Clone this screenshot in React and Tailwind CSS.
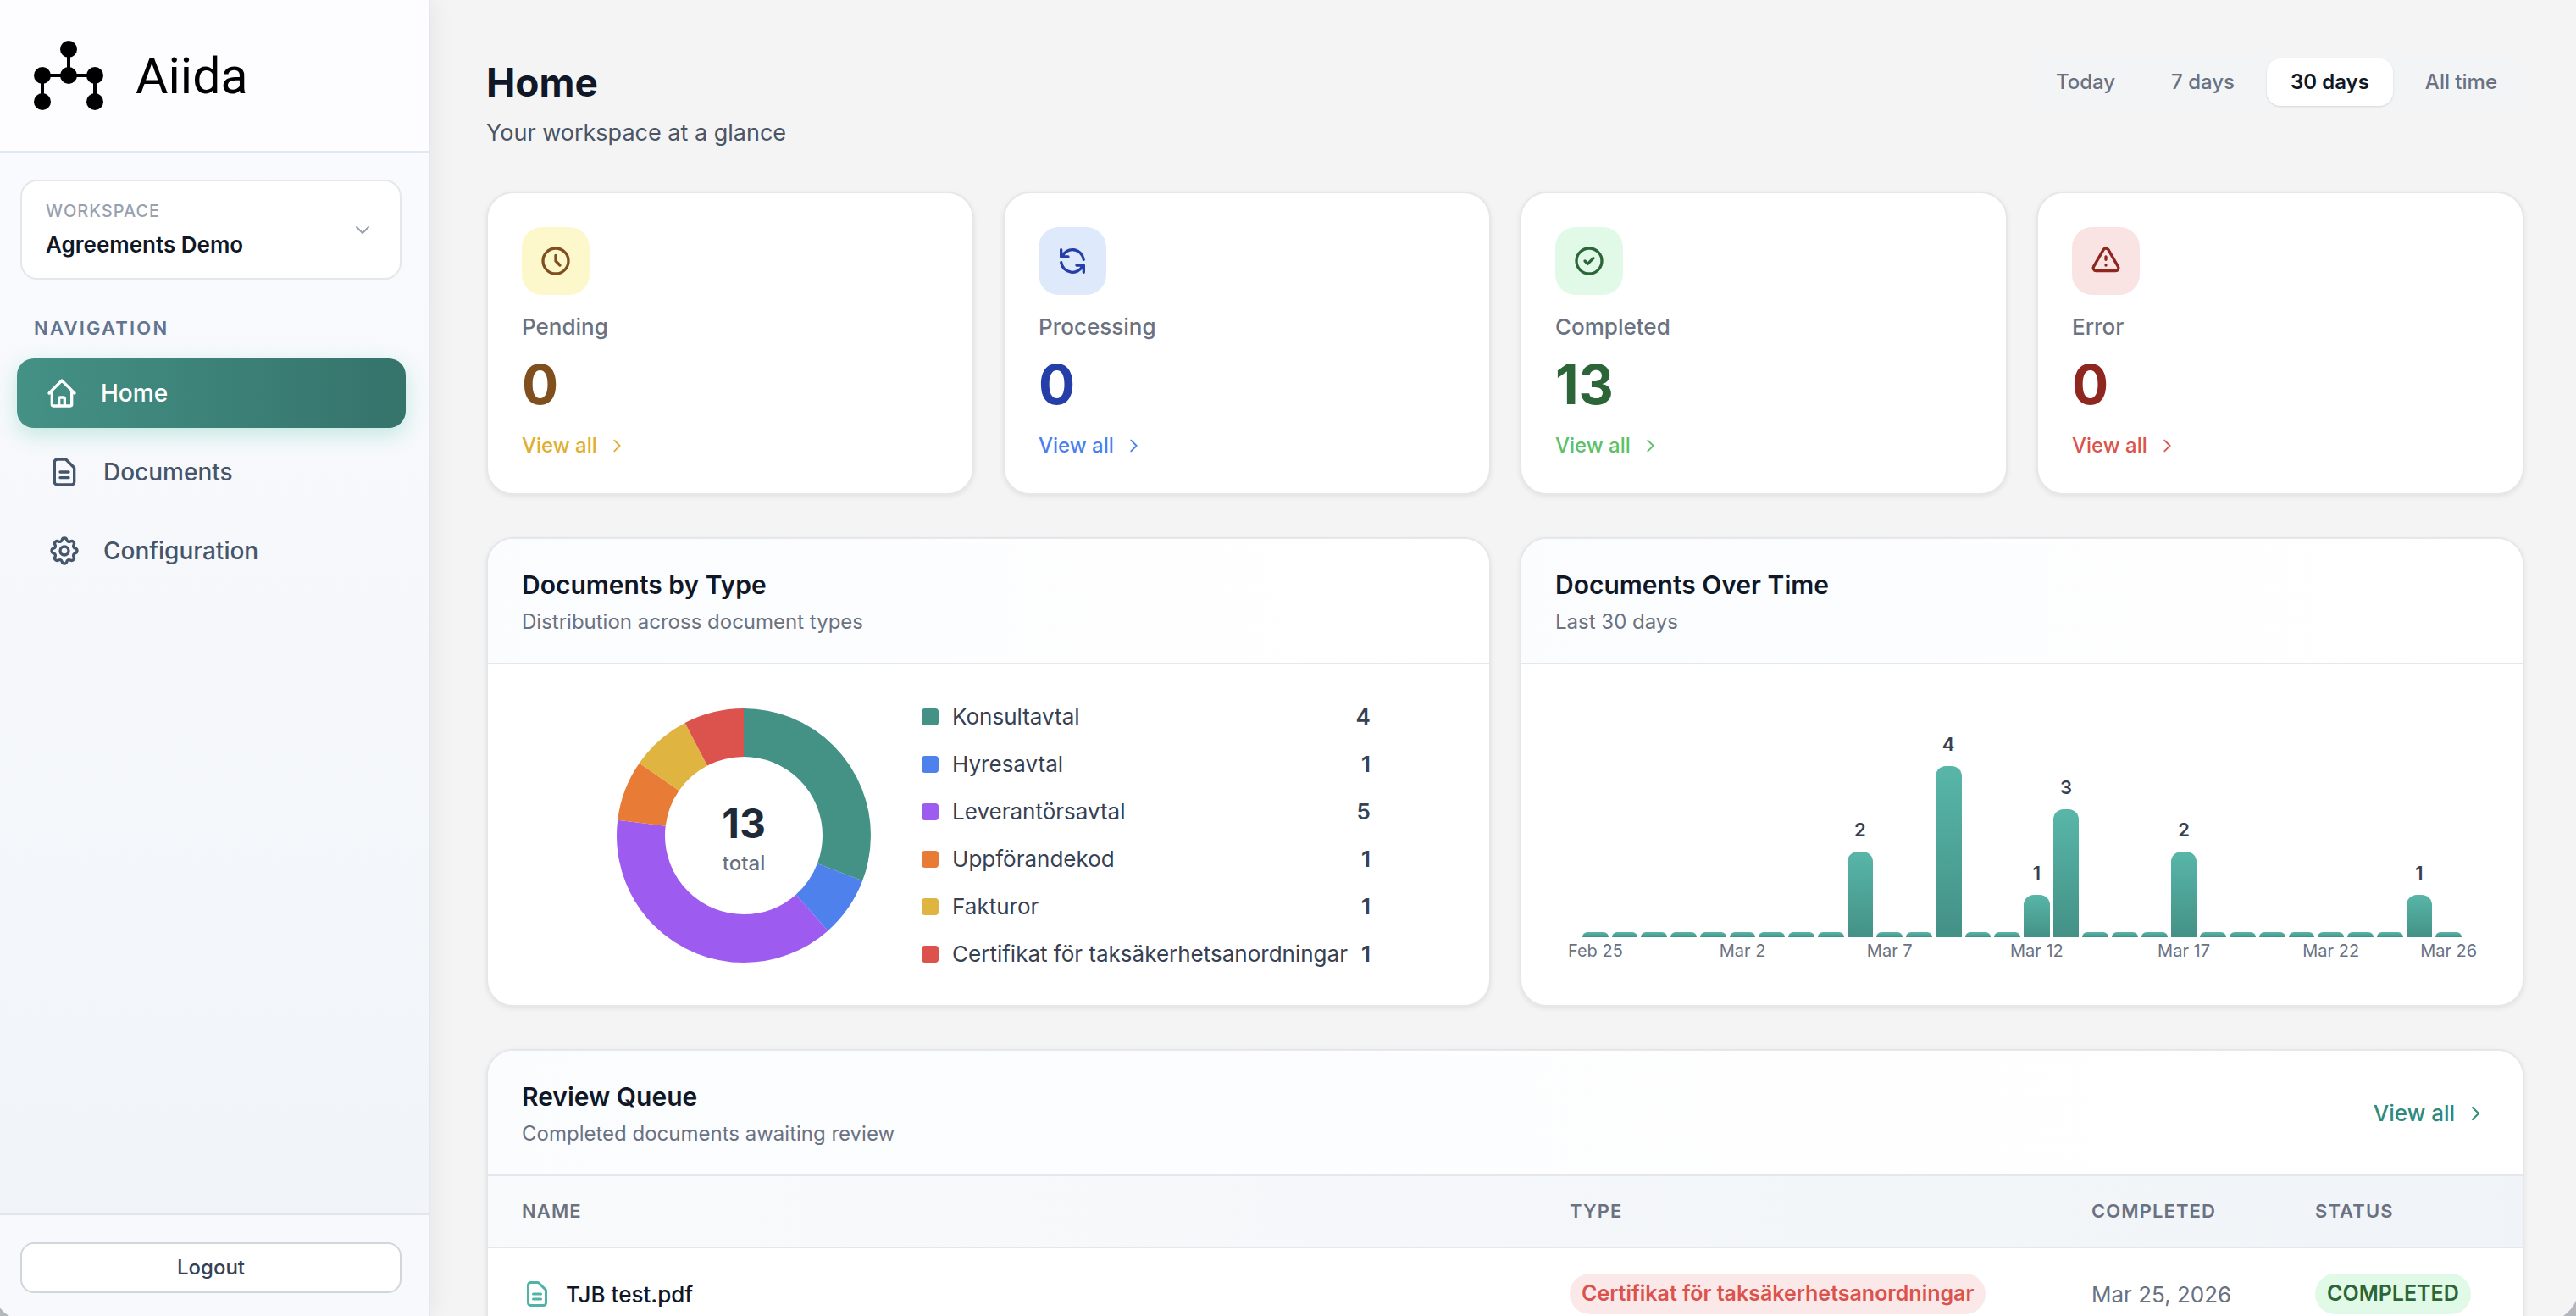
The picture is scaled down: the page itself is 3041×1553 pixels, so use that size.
import React, { useState } from "react";

const STATS = [
  {
    label: "Pending",
    value: 0,
    tile: "bg-[#fdf8cb] text-[#7f4f1d]",
    number: "text-[#7f4f1d]",
    link: "text-[#e0ae33]",
    icon: "M12 8v4l3 3m6-3a9 9 0 11-18 0 9 9 0 0118 0z",
  },
  {
    label: "Processing",
    value: 0,
    tile: "bg-[#dee9fb] text-[#263ea8]",
    number: "text-[#263ea8]",
    link: "text-[#4a80ee]",
    icon: "M4 4v5h.582m15.356 2A8.001 8.001 0 004.582 9m0 0H9m11 11v-5h-.581m0 0a8.003 8.003 0 01-15.357-2m15.357 2H15",
  },
  {
    label: "Completed",
    value: 13,
    tile: "bg-[#e1fae8] text-[#2c6538]",
    number: "text-[#2c6538]",
    link: "text-[#5cc166]",
    icon: "M9 12l2 2 4-4m6 2a9 9 0 11-18 0 9 9 0 0118 0z",
  },
  {
    label: "Error",
    value: 0,
    tile: "bg-[#f9e3e3] text-[#8f2720]",
    number: "text-[#8f2720]",
    link: "text-[#dc524c]",
    icon: "M12 9v2m0 4h.01m-6.938 4h13.856c1.54 0 2.502-1.667 1.732-3L13.732 4c-.77-1.333-2.694-1.333-3.464 0L3.34 16c-.77 1.333.192 3 1.732 3z",
  },
];

const DOC_TYPES = [
  { name: "Konsultavtal", count: 4, color: "#449186" },
  { name: "Hyresavtal", count: 1, color: "#4f81ec" },
  { name: "Leverantörsavtal", count: 5, color: "#9d5bef" },
  { name: "Uppförandekod", count: 1, color: "#e87b35" },
  { name: "Fakturor", count: 1, color: "#e0b440" },
  { name: "Certifikat för taksäkerhetsanordningar", count: 1, color: "#dc524c" },
];

const DAILY = [
  0, 0, 0, 0, 0, 0, 0, 0, 0, 2, 0, 0, 4, 0, 0, 1, 3, 0, 0, 0, 2, 0, 0, 0, 0, 0,
  0, 0, 1, 0,
];
const DAY_LABELS = {
  0: "Feb 25",
  5: "Mar 2",
  10: "Mar 7",
  15: "Mar 12",
  20: "Mar 17",
  25: "Mar 22",
  29: "Mar 26",
};
const BAR_MAX = 202;

const RANGES = ["Today", "7 days", "30 days", "All time"];

const ICON_HOME =
  "M3 12l2-2m0 0l7-7 7 7M5 10v10a1 1 0 001 1h3m10-11l2 2m-2-2v10a1 1 0 01-1 1h-3m-6 0a1 1 0 001-1v-4a1 1 0 011-1h2a1 1 0 011 1v4a1 1 0 001 1m-6 0h6";
const ICON_DOC =
  "M9 12h6m-6 4h6m2 5H7a2 2 0 01-2-2V5a2 2 0 012-2h5.586a1 1 0 01.707.293l5.414 5.414a1 1 0 01.293.707V19a2 2 0 01-2 2z";
const ICON_COG =
  "M10.325 4.317c.426-1.756 2.924-1.756 3.35 0a1.724 1.724 0 002.573 1.066c1.543-.94 3.31.826 2.37 2.37a1.724 1.724 0 001.065 2.572c1.756.426 1.756 2.924 0 3.35a1.724 1.724 0 00-1.066 2.573c.94 1.543-.826 3.31-2.37 2.37a1.724 1.724 0 00-2.572 1.065c-.426 1.756-2.924 1.756-3.35 0a1.724 1.724 0 00-2.573-1.066c-1.543.94-3.31-.826-2.37-2.37a1.724 1.724 0 00-1.065-2.572c-1.756-.426-1.756-2.924 0-3.35a1.724 1.724 0 001.066-2.573c-.94-1.543.826-3.31 2.37-2.37.996.608 2.296.07 2.572-1.065z M15 12a3 3 0 11-6 0 3 3 0 016 0z";
const ICON_RIGHT = "M9 5l7 7-7 7";
const ICON_DOWN = "M19 9l-7 7-7-7";

const Icon = ({ d, className }) => (
  <svg
    className={className}
    viewBox="0 0 24 24"
    fill="none"
    stroke="currentColor"
    strokeWidth="2"
    strokeLinecap="round"
    strokeLinejoin="round"
    aria-hidden="true"
  >
    <path d={d} />
  </svg>
);

const Logo = () => (
  <svg className="size-[82px]" viewBox="0 0 82 82" aria-hidden="true">
    <path d="M41 10v31M10 41h62M10 41v31M72 41v31" stroke="#000" strokeWidth="4" />
    <circle cx="41" cy="10" r="10" />
    <circle cx="10" cy="41" r="10" />
    <circle cx="41" cy="41" r="10" />
    <circle cx="72" cy="41" r="10" />
    <circle cx="10" cy="72" r="10" />
    <circle cx="72" cy="72" r="10" />
  </svg>
);

const Sidebar = () => (
  <aside className="relative z-10 flex w-[508px] shrink-0 flex-col border-r-2 border-[#e2e8f0] bg-linear-to-b from-[#fafbfe] to-[#f0f4f8] shadow-[4px_0_24px_rgba(0,0,0,0.06)]">
    <div className="flex h-[180px] shrink-0 items-center gap-[38px] border-b-2 border-[#e2e8f0] bg-[#fdfdff] px-10">
      <Logo />
      <span className="font-[Roboto,sans-serif] text-[59px] leading-none text-black">
        Aiida
      </span>
    </div>

    <div className="flex-1 pt-8">
      <div className="px-6 pr-8">
        <button
          type="button"
          aria-haspopup="listbox"
          className="flex w-full items-center justify-between rounded-[20px] border-2 border-gray-200 bg-white px-7 py-[21px] text-left"
        >
          <span className="flex flex-col gap-2">
            <span className="text-[20px] leading-7 font-medium tracking-wider text-gray-400">
              WORKSPACE
            </span>
            <span className="text-[26px] leading-9 font-semibold text-gray-900">
              Agreements Demo
            </span>
          </span>
          <Icon d={ICON_DOWN} className="mr-1 size-6 text-gray-400" />
        </button>
      </div>

      <h2 className="mt-[42px] px-10 text-[22px] leading-[30px] font-semibold tracking-widest text-slate-500">
        NAVIGATION
      </h2>
      <nav className="mt-[21px] flex flex-col gap-[11px] px-5 pr-[27px] text-[28px] font-medium">
        <a
          href="#home"
          aria-current="page"
          className="flex h-[82px] items-center gap-[26px] rounded-[20px] bg-linear-to-r from-[#449186] to-[#35736b] pl-[33px] text-white shadow-[0_8px_24px_rgba(45,180,150,0.26)]"
        >
          <Icon d={ICON_HOME} className="size-10" />
          Home
        </a>
        <a
          href="#documents"
          className="flex h-[82px] items-center gap-[26px] rounded-[20px] pl-9 text-slate-600"
        >
          <Icon d={ICON_DOC} className="size-10" />
          Documents
        </a>
        <a
          href="#configuration"
          className="flex h-[82px] items-center gap-[26px] rounded-[20px] pl-9 text-slate-600"
        >
          <Icon d={ICON_COG} className="size-10" />
          Configuration
        </a>
      </nav>
    </div>

    <div className="border-t-2 border-[#e2e6ec] bg-[#f8f9fc] px-6 pt-8 pr-8 pb-[27px]">
      <button
        type="button"
        className="h-[60px] w-full rounded-2xl border-2 border-gray-300 bg-white text-[24px] font-medium text-gray-700"
      >
        Logout
      </button>
    </div>
  </aside>
);

const StatCard = ({ stat }) => (
  <div className="rounded-[32px] border-2 border-gray-200 bg-white p-10 shadow-[0_2px_6px_rgba(0,0,0,0.08)]">
    <div className={`flex size-20 items-center justify-center rounded-3xl ${stat.tile}`}>
      <Icon d={stat.icon} className="size-10" />
    </div>
    <p className="mt-5 text-[26px] leading-9 font-medium text-gray-500">{stat.label}</p>
    <p className={`mt-3.5 text-[64px] leading-[72px] font-bold ${stat.number}`}>
      {stat.value}
    </p>
    <a
      href="#documents"
      className={`mt-5 inline-flex items-center gap-3 text-[24px] leading-8 font-medium ${stat.link}`}
    >
      View all
      <Icon d={ICON_RIGHT} className="size-[22px]" />
    </a>
  </div>
);

const Panel = ({ title, subtitle, action, children }) => (
  <section className="flex flex-col overflow-hidden rounded-[32px] border-2 border-gray-200 bg-white shadow-[0_2px_6px_rgba(0,0,0,0.08)]">
    <header className="flex items-center justify-between border-b-2 border-gray-200 bg-linear-to-r from-[#fbfcfe] to-white px-10 pt-[34px] pb-8">
      <div>
        <h2 className="text-[30px] leading-10 font-semibold text-gray-900">{title}</h2>
        <p className="mt-2 text-[24px] leading-8 text-gray-500">{subtitle}</p>
      </div>
      {action}
    </header>
    {children}
  </section>
);

const Donut = () => {
  const total = DOC_TYPES.reduce((sum, t) => sum + t.count, 0);
  const r = 121.5;
  const length = 2 * Math.PI * r;
  let start = 0;

  return (
    <div className="relative size-[300px] shrink-0">
      <svg viewBox="0 0 300 300" className="size-full -rotate-90" aria-hidden="true">
        {DOC_TYPES.map((type) => {
          const part = (type.count / total) * length;
          const offset = -start;
          start += part;
          return (
            <circle
              key={type.name}
              cx="150"
              cy="150"
              r={r}
              fill="none"
              stroke={type.color}
              strokeWidth="57"
              strokeDasharray={`${part} ${length - part}`}
              strokeDashoffset={offset}
            />
          );
        })}
      </svg>
      <div className="absolute inset-0 flex flex-col items-center justify-center pt-2">
        <span className="text-[48px] leading-[58px] font-bold text-gray-800">{total}</span>
        <span className="text-[24px] leading-9 font-medium text-gray-500">total</span>
      </div>
    </div>
  );
};

const DocumentsByType = () => (
  <Panel title="Documents by Type" subtitle="Distribution across document types">
    <div className="flex items-center justify-center gap-[60px] pt-11 pb-[42px] pl-3">
      <Donut />
      <ul className="flex flex-col gap-5 text-[26px] leading-9 text-gray-700">
        {DOC_TYPES.map((type) => (
          <li key={type.name} className="flex items-center gap-4">
            <span className="size-5 rounded" style={{ backgroundColor: type.color }} />
            <span className="flex-1">{type.name}</span>
            <span className="font-semibold">{type.count}</span>
          </li>
        ))}
      </ul>
    </div>
  </Panel>
);

const DocumentsOverTime = () => {
  const max = Math.max(...DAILY);

  return (
    <Panel title="Documents Over Time" subtitle="Last 30 days">
      <div className="flex flex-1 items-end gap-1 px-[72px] pb-[52px]">
        {DAILY.map((count, day) => (
          <div key={day} className="flex min-w-0 flex-1 flex-col">
            {count > 0 && (
              <span className="mb-3 text-center text-[22px] leading-7 font-semibold text-gray-700">
                {count}
              </span>
            )}
            <div
              className={`bg-linear-to-b from-[#58b6a9] to-[#449186] ${
                count ? "rounded-t-xl" : "rounded-t-md"
              }`}
              style={{ height: count ? (count / max) * BAR_MAX : 6 }}
            />
            <span className="mt-1 flex h-6 justify-center text-[20px] leading-6 whitespace-nowrap text-gray-500">
              {DAY_LABELS[day]}
            </span>
          </div>
        ))}
      </div>
    </Panel>
  );
};

const ReviewQueue = () => (
  <Panel
    title="Review Queue"
    subtitle="Completed documents awaiting review"
    action={
      <a
        href="#documents"
        className="flex items-center gap-3 px-1 text-[26px] leading-9 font-medium text-[#2f8a7d]"
      >
        View all
        <Icon d={ICON_RIGHT} className="size-6" />
      </a>
    }
  >
    <table className="w-full table-fixed text-left">
      <thead>
        <tr className="h-[84px] border-b-2 border-gray-200 bg-linear-to-r from-[#f9fafb] to-[#f0f4f8] text-[22px] tracking-wider text-gray-500">
          <th className="w-[51.5%] px-10 font-semibold">NAME</th>
          <th className="px-10 font-semibold">TYPE</th>
          <th className="w-[264px] px-10 font-semibold">COMPLETED</th>
          <th className="w-[285px] px-10 font-semibold">STATUS</th>
        </tr>
      </thead>
      <tbody>
        <tr className="text-[26px] whitespace-nowrap">
          <td className="px-10 py-[30px]">
            <a href="#document" className="flex items-center gap-4 font-medium text-gray-900">
              <Icon d={ICON_DOC} className="size-9 text-[#4fb3a6]" />
              TJB test.pdf
            </a>
          </td>
          <td className="px-10 py-[30px]">
            <span className="inline-flex h-12 items-center rounded-full bg-[#fbe9e9] px-3.5 text-[25px] font-semibold text-[#dc524c]">
              Certifikat för taksäkerhetsanordningar
            </span>
          </td>
          <td className="px-10 py-[30px] text-gray-500">Mar 25, 2026</td>
          <td className="px-10 py-[30px]">
            <span className="inline-flex h-12 items-center rounded-full bg-[#e1fae8] px-3.5 text-[25px] font-semibold text-[#2c6538]">
              COMPLETED
            </span>
          </td>
        </tr>
      </tbody>
    </table>
  </Panel>
);

const App = () => {
  const [range, setRange] = useState("30 days");

  return (
    <div className="relative flex h-screen overflow-hidden bg-[#f4f4f4] font-[Inter,sans-serif]">
      <Sidebar />

      <main className="min-w-0 flex-1 overflow-hidden pt-[65px] pr-[61px] pl-[66px]">
        <div className="mb-[49px] flex items-start justify-between">
          <div>
            <h1 className="text-[46px] leading-[64px] font-bold text-gray-900">Home</h1>
            <p className="mt-2 text-[27px] leading-10 text-gray-600">
              Your workspace at a glance
            </p>
          </div>
          <div className="flex gap-2.5 rounded-[20px] bg-gray-100 p-1">
            {RANGES.map((item) => (
              <button
                key={item}
                type="button"
                aria-pressed={item === range}
                onClick={() => setRange(item)}
                className={`h-14 rounded-2xl px-7 text-[24px] ${
                  item === range
                    ? "bg-white font-semibold text-gray-900 shadow-sm"
                    : "font-medium text-gray-500"
                }`}
              >
                {item}
              </button>
            ))}
          </div>
        </div>

        <div className="grid grid-cols-4 gap-[34px]">
          {STATS.map((stat) => (
            <StatCard key={stat.label} stat={stat} />
          ))}
        </div>

        <div className="my-[50px] grid grid-cols-2 gap-[34px]">
          <DocumentsByType />
          <DocumentsOverTime />
        </div>

        <ReviewQueue />
      </main>

      {/* window corners */}
      <svg className="absolute bottom-0 left-0 z-20 h-[10px] w-[11px]" viewBox="0 0 11 10" aria-hidden="true">
        <path d="M0 0Q4 6 11 10H0z" fill="#b4b7bc" />
      </svg>
      <svg className="absolute right-0 bottom-0 z-20 h-[18px] w-[15px]" viewBox="0 0 15 18" aria-hidden="true">
        <path d="M15 0Q10 11 0 18H15z" fill="#b4b7bc" />
      </svg>
    </div>
  );
};

export default App;
